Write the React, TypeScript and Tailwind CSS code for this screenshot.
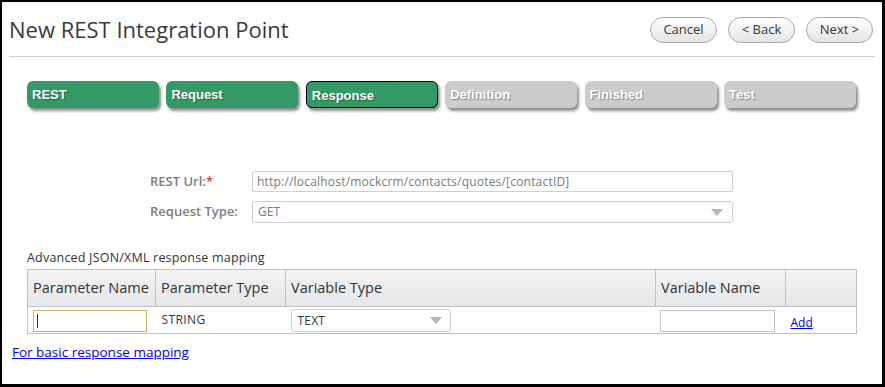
const font = { fontFamily: '"Open Sans", "DejaVu Sans", sans-serif' }

const steps = [
  { label: "REST", state: "done" },
  { label: "Request", state: "done" },
  { label: "Response", state: "active" },
  { label: "Definition", state: "todo" },
  { label: "Finished", state: "todo" },
  { label: "Test", state: "todo" },
]

function PillButton({ children }: { children: React.ReactNode }) {
  return (
    <button className="h-[26px] w-[67px] rounded-full border border-[#a9a9a9] bg-gradient-to-b from-white to-[#e4e4e4] text-[13px] text-[#333] shadow-[inset_0_1px_0_#fff]">
      {children}
    </button>
  )
}

function Arrow() {
  return (
    <svg width="12" height="7" viewBox="0 0 12 7" className="shrink-0">
      <path d="M0 0 L12 0 L6 7 Z" fill="#b5b5b5" />
    </svg>
  )
}

export default function App() {
  return (
    <div
      className="box-border h-[387px] w-[885px] overflow-hidden border-t-2 border-l-2 border-r-[3px] border-b-[3px] border-black bg-white"
      style={font}
    >
      <div className="flex items-center justify-between pl-[7px] pr-[9px] pt-[12px]">
        <h1 className="text-[22px] leading-[30px] text-[#3a3a3a]">New REST Integration Point</h1>
        <div className="flex gap-[11px] pt-[1px]">
          <PillButton>Cancel</PillButton>
          <PillButton>&lt; Back</PillButton>
          <PillButton>Next &gt;</PillButton>
        </div>
      </div>
      <div className="mx-[7px] mt-[12px] h-px bg-[#cfcfcf]" />

      <div className="ml-[25px] mt-[24px] flex gap-[7.4px]">
        {steps.map((s) => (
          <div
            key={s.label}
            className={
              "flex h-[27px] w-[132px] items-center rounded-[6px] pl-[5px] text-[13px] font-bold text-white shadow-[2px_3px_3px_rgba(0,0,0,0.45)] [text-shadow:1px_1px_1px_rgba(0,0,0,0.35)] " +
              (s.state === "todo" ? "bg-[#cccccc]" : "bg-[#339966]") +
              (s.state === "active" ? " border border-black pt-[2px]" : "")
            }
            style={{ fontFamily: '"Liberation Sans", sans-serif' }}
          >
            {s.label}
          </div>
        ))}
      </div>

      <div className="ml-[148px] mt-[63px] flex flex-col gap-[9px] text-[13px]">
        <div className="flex items-center">
          <span className="w-[102px] font-semibold text-[#7d7d7d]">
            REST Url:<span className="text-[#e0393e]">*</span>
          </span>
          <div className="flex h-[21px] w-[481px] items-center rounded-[2px] border border-[#cfcfcf] px-[4px] text-[12px] tracking-[0.2px] text-[#7a7a7a]">
            http://localhost/mockcrm/contacts/quotes/[contactID]
          </div>
        </div>
        <div className="flex items-center">
          <span className="w-[102px] font-semibold text-[#7d7d7d]">Request Type:</span>
          <div className="flex h-[22px] w-[481px] items-center justify-between rounded-[3px] border border-[#cfcfcf] px-[5px] pr-[9px] text-[12px] text-[#7a7a7a]">
            GET
            <Arrow />
          </div>
        </div>
      </div>

      <div className="ml-[25px] mt-[26px] text-[12.5px] tracking-[0.2px] text-[#333]">Advanced JSON/XML response mapping</div>
      <table className="ml-[25px] mt-[1px] w-[830px] border-collapse border border-[#c2c2c2] text-[#333]">
        <thead>
          <tr className="h-[37px] bg-gradient-to-b from-[#f3f3f3] to-[#e6e7e9] text-left text-[14.5px]">
            <th className="w-[128px] border border-[#c2c2c2] px-[5px] font-normal">Parameter Name</th>
            <th className="w-[130px] border border-[#c2c2c2] px-[5px] font-normal">Parameter Type</th>
            <th className="w-[370px] border border-[#c2c2c2] px-[5px] font-normal">Variable Type</th>
            <th className="w-[130px] border border-[#c2c2c2] px-[5px] font-normal">Variable Name</th>
            <th className="border border-[#c2c2c2] font-normal"></th>
          </tr>
        </thead>
        <tbody>
          <tr className="h-[27px] text-[12px]">
            <td className="px-[5px] pt-[2px]">
              <div className="h-[22px] w-[114px] border border-[#c9b26a]">
                <div className="ml-[3px] mt-[3px] h-[14px] w-px bg-[#333]" />
              </div>
            </td>
            <td className="px-[6px] tracking-[0.4px]">STRING</td>
            <td className="px-[5px] pt-[2px]">
              <div className="flex h-[23px] w-[160px] items-center justify-between rounded-[3px] border border-[#cfcfcf] pl-[6px] pr-[8px] tracking-[0.2px]">
                TEXT
                <Arrow />
              </div>
            </td>
            <td className="px-[4px] pt-[2px]">
              <div className="h-[22px] w-[115px] border border-[#c2c2c2]" />
            </td>
            <td className="px-[5px] pt-[6px]">
              <a href="#" className="text-[12px] text-[#0000ee] underline">Add</a>
            </td>
          </tr>
        </tbody>
      </table>

      <a href="#" className="ml-[10px] mt-[8px] inline-block text-[13.5px] text-[#0000ee] underline">
        For basic response mapping
      </a>
    </div>
  )
}
